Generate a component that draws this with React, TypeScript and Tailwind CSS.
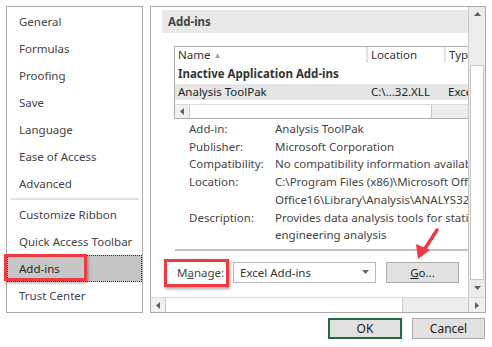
import { type ReactNode } from 'react'

const font = 'font-["Noto_Sans","Open_Sans",sans-serif]'

/* ── Left navigation ── */

const topItems = ['General', 'Formulas', 'Proofing', 'Save', 'Language', 'Ease of Access', 'Advanced']
const bottomItems = ['Customize Ribbon', 'Quick Access Toolbar', 'Add-ins', 'Trust Center']

function NavItem({ label }: { label: string }) {
  const active = label === 'Add-ins'
  return (
    <div
      className={
        active
          ? 'h-[27px] flex items-center pl-[11px] bg-[#c6c6c6] border border-dotted border-[#333] text-[#262626]'
          : 'h-[27px] flex items-center pl-[12px] text-[#444]'
      }
    >
      {label}
    </div>
  )
}

function Nav() {
  return (
    <div className="w-[137px] border border-[#ababab] pt-[1px] flex flex-col">
      {topItems.map((l) => (
        <NavItem key={l} label={l} />
      ))}
      <div className="mx-[3px] my-[1px] h-[2px] bg-[#e2e2e2]" />
      {bottomItems.map((l) => (
        <NavItem key={l} label={l} />
      ))}
    </div>
  )
}

/* ── Scroll bits ── */

function Tri({ dir }: { dir: 'up' | 'down' | 'left' | 'right' }) {
  const pts = {
    up: '1,6 4.5,2 8,6',
    down: '1,2 4.5,6 8,2',
    left: '6,1 2,4.5 6,8',
    right: '2,1 6,4.5 2,8',
  }[dir]
  return (
    <svg width="9" height="9" viewBox="0 0 9 9">
      <polygon points={pts} fill="#606060" />
    </svg>
  )
}

function HScroll({ trackEnd, className }: { trackEnd: number; className?: string }) {
  return (
    <div className={`flex h-[14px] ${className ?? ''}`}>
      <div className="w-[15px] flex items-center justify-center bg-[#f0f0f0] border-r border-[#c8c8c8]">
        <Tri dir="left" />
      </div>
      <div className="bg-white border-r border-[#c8c8c8]" style={{ width: trackEnd }} />
      <div className="flex-1 bg-[#ececec]" />
    </div>
  )
}

function Row({ label, children }: { label: string; children: ReactNode }) {
  return (
    <div className="flex">
      <div className="w-[86px] shrink-0">{label}</div>
      <div className="whitespace-nowrap">{children}</div>
    </div>
  )
}

/* ── Right panel ── */

function AddinsTable() {
  return (
    <div className="ml-[12px] mt-[13px] w-[320px] h-[73px] border border-[#adadad] flex flex-col whitespace-nowrap">
      <div className="h-[16px] flex bg-[#f3f3f3] text-[#333]">
        <div className="w-[193px] bg-white border-r-2 border-[#e4e4e4] pl-[3px] flex items-center leading-none">
          Name <span className="ml-[3px] text-[8px] text-[#a0a0a0]">▲</span>
        </div>
        <div className="w-[78px] bg-white border-r-2 border-[#e4e4e4] pl-[3px] flex items-center leading-none">
          Location
        </div>
        <div className="flex-1 bg-white pl-[3px] flex items-center leading-none">Type</div>
      </div>
      <div className="h-[21px] flex items-center pl-[3px] font-bold text-[#333]">
        Inactive Application Add-ins
      </div>
      <div className="h-[16px] flex items-center bg-[#e5e5e5] text-[#222]">
        <div className="w-[195px] shrink-0 pl-[3px]">Analysis ToolPak</div>
        <div className="w-[78px] shrink-0 pl-[1px]">C:\...32.XLL</div>
        <div className="shrink-0">Excel Add-in</div>
      </div>
      <div className="h-[4px]" />
      <HScroll trackEnd={242} className="border-t border-[#dcdcdc]" />
    </div>
  )
}

function Details() {
  return (
    <div className="ml-[27px] mt-[1px] leading-[17.7px] text-[#444]">
      <Row label="Add-in:">Analysis ToolPak</Row>
      <Row label="Publisher:">Microsoft Corporation</Row>
      <Row label="Compatibility:">No compatibility information available</Row>
      <Row label="Location:">
        C:\Program Files (x86)\Microsoft Office\root\
        <br />
        Office16\Library\Analysis\ANALYS32.XLL
      </Row>
      <Row label="Description:">
        Provides data analysis tools for statistical and
        <br />
        engineering analysis
      </Row>
    </div>
  )
}

function ManageRow() {
  return (
    <div className="mt-[11px] flex items-center h-[21px]">
      <div className="w-[71px] pl-[15px] text-[#444]">
        M<span className="underline">a</span>nage:
      </div>
      <div className="w-[143px] h-[21px] border border-[#b9b9b9] bg-white flex items-center pl-[6px] pr-[5px] text-[#333]">
        <span className="flex-1">Excel Add-ins</span>
        <svg width="9" height="6" viewBox="0 0 9 6">
          <polygon points="1,1 8,1 4.5,5" fill="#666" />
        </svg>
      </div>
      <div className="ml-[10px] w-[73px] h-[21px] border border-[#adadad] bg-[#e1e1e1] flex items-center justify-center text-[#222]">
        <span>
          <span className="underline">G</span>o...
        </span>
      </div>
    </div>
  )
}

function VScroll() {
  return (
    <div className="w-[17px] border-l border-[#c8c8c8] flex flex-col bg-[#ececec]">
      <div className="h-[15px] flex items-center justify-center">
        <Tri dir="up" />
      </div>
      <div className="h-[43px]" />
      <div className="flex-1 bg-white border border-[#c8c8c8] mx-[1px]" />
      <div className="h-[17px] flex items-center justify-center">
        <Tri dir="down" />
      </div>
    </div>
  )
}

function RightPanel() {
  return (
    <div className="w-[336px] border border-[#ababab] flex flex-col">
      <div className="flex-1 flex min-h-0">
        <div className="flex-1 overflow-hidden pt-[3px] pl-[11px] flex flex-col">
          <div className="h-[23px] bg-[#e9e9e9] flex items-center pl-[6px] font-bold text-[#444] shrink-0">
            Add-ins
          </div>
          <AddinsTable />
          <Details />
          <div className="ml-[13px] mt-[5px] h-[2px] bg-[#c4c4c4] w-[300px] shrink-0" />
          <ManageRow />
        </div>
        <VScroll />
      </div>
      <div className="flex border-t border-[#dadada]">
        <HScroll trackEnd={237} className="flex-1" />
        <div className="w-[17px] bg-[#f0f0f0] border-l border-[#c8c8c8] flex items-center justify-center">
          <Tri dir="right" />
        </div>
      </div>
    </div>
  )
}

/* ── Page ── */

export default function App() {
  return (
    <div className={`relative w-[492px] h-[347px] bg-white overflow-hidden text-[11.5px] ${font}`}>
      <div className="flex flex-col pl-[6px] pt-[6px]">
        <div className="flex gap-[7px] h-[307px]">
          <Nav />
          <RightPanel />
        </div>
        <div className="mt-[5px] flex justify-end gap-[10px] pr-[7px]">
          <div className="w-[74px] h-[21px] border-2 border-[#1e6b41] bg-[#e1e1e1] flex items-center justify-center text-[12px] text-[#222]">
            OK
          </div>
          <div className="w-[73px] h-[21px] border border-[#adadad] bg-[#e1e1e1] flex items-center justify-center text-[12px] text-[#222]">
            Cancel
          </div>
        </div>
      </div>

      {/* annotations */}
      <div className="absolute left-[4px] top-[254px] w-[83px] h-[27px] border-[3px] border-[#ee3a43] shadow-[1px_2px_3px_rgba(0,0,0,0.35)]" />
      <div className="absolute left-[164px] top-[259px] w-[65px] h-[28px] border-[3px] border-[#ee3a43] shadow-[1px_2px_3px_rgba(0,0,0,0.35)]" />
      <svg className="absolute left-[410px] top-[226px]" width="34" height="38" viewBox="0 0 34 38">
        <line x1="27" y1="4" x2="14" y2="24" stroke="#ee3a43" strokeWidth="3.5" strokeLinecap="round" />
        <polygon points="8,33 6,18 20,24" fill="#ee3a43" />
      </svg>
    </div>
  )
}
